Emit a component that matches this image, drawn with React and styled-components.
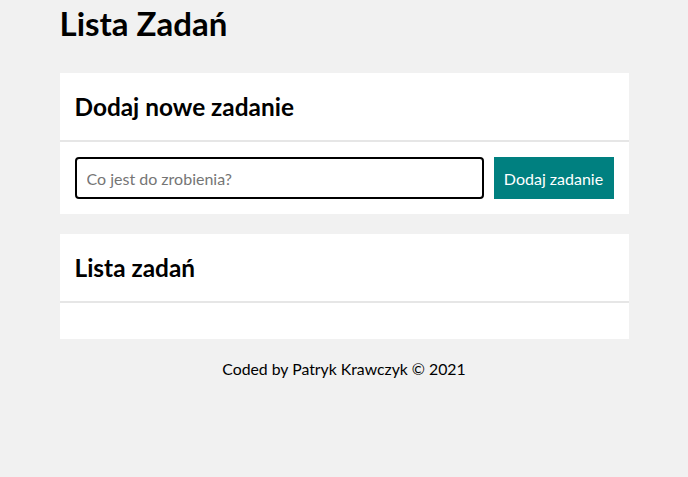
import React from "react";
import styled, { createGlobalStyle } from "styled-components";

const GlobalStyle = createGlobalStyle`
  html, body { margin: 0; padding: 0; }
  body {
    background: #f1f1f1;
    font-family: Lato, "Open Sans", sans-serif;
    color: #000;
  }
`;

const Main = styled.main`
  max-width: 569px;
  margin: 0 auto;
  padding-bottom: 40px;
`;

const Title = styled.h1`
  font-size: 33px;
  font-weight: 700;
  line-height: 40px;
  margin: 3px 0 30px;
`;

const Section = styled.section`
  background: #fff;
  margin-bottom: 20px;
`;

const SectionHeader = styled.header`
  padding: 0 15px;
  border-bottom: 2px solid #e6e6e6;
`;

const SectionTitle = styled.h2`
  font-size: 24.4px;
  font-weight: 700;
  line-height: 29px;
  margin: 0;
  padding: 19px 0;
`;

const SectionBody = styled.div`
  padding: 15px;
  min-height: ${({ $minHeight }) => $minHeight || 0}px;
  box-sizing: border-box;
`;

const Form = styled.form`
  display: flex;
  gap: 10px;
`;

const Input = styled.input`
  flex: 1;
  height: 42px;
  box-sizing: border-box;
  border: 2px solid #000;
  border-radius: 4px;
  padding: 0 10px;
  font-family: Lato, sans-serif;
  font-size: 16px;
  outline: none;
  &::placeholder { color: #757575; }
`;

const Button = styled.button`
  width: 120px;
  height: 42px;
  border: none;
  background: #008080;
  color: #fff;
  font-family: Lato, sans-serif;
  font-size: 16px;
  padding: 0 10px;
  cursor: pointer;
`;

const TaskList = styled.ul`
  list-style: none;
  margin: 0;
  padding: 0;
`;

const Footer = styled.footer`
  text-align: center;
  font-size: 15.8px;
  line-height: 19px;
`;

export default function App() {
  return (
    <>
      <GlobalStyle />
      <Main>
        <Title>Lista Zadań</Title>
        <Section>
          <SectionHeader>
            <SectionTitle>Dodaj nowe zadanie</SectionTitle>
          </SectionHeader>
          <SectionBody>
            <Form onSubmit={(e) => e.preventDefault()}>
              <Input placeholder="Co jest do zrobienia?" />
              <Button type="submit">Dodaj zadanie</Button>
            </Form>
          </SectionBody>
        </Section>
        <Section>
          <SectionHeader>
            <SectionTitle>Lista zadań</SectionTitle>
          </SectionHeader>
          <SectionBody $minHeight={36}>
            <TaskList />
          </SectionBody>
        </Section>
        <Footer>Coded by Patryk Krawczyk © 2021</Footer>
      </Main>
    </>
  );
}
